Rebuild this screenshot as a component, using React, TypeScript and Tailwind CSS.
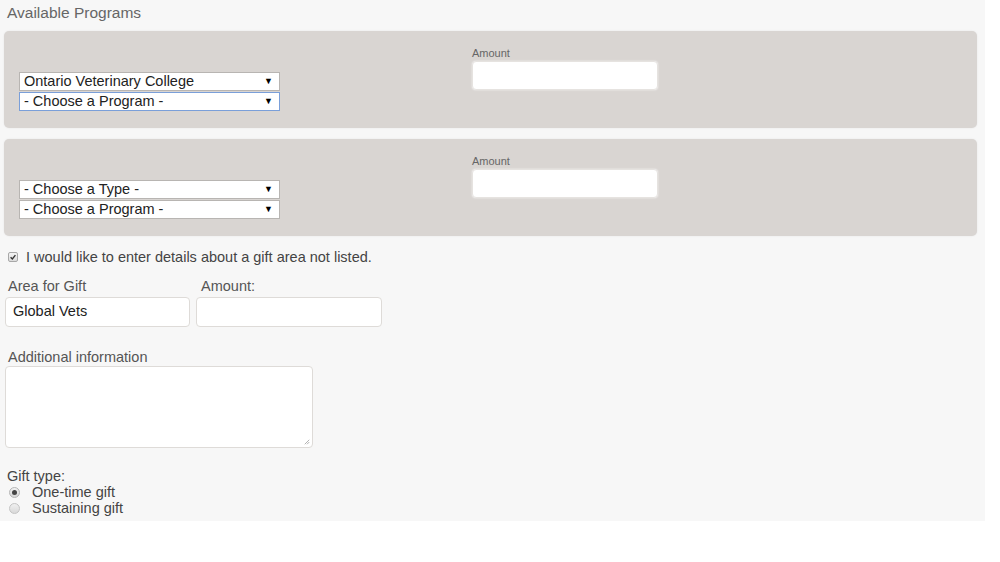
import React from 'react'

function FakeSelect({ label, focused }: { label: string; focused?: boolean }) {
  return (
    <div
      className={`flex h-[19px] w-[261px] items-center justify-between bg-white pl-[4px] pr-[6px] text-[14.5px] leading-none text-[#222] border ${
        focused ? 'border-[#7a9fd9]' : 'border-[#b8b5b2]'
      }`}
    >
      <span>{label}</span>
      <span className="text-[9px] text-black">▼</span>
    </div>
  )
}

function ProgramPanel({ first, second, focused }: { first: string; second: string; focused?: boolean }) {
  return (
    <div className="flex h-[97px] w-[973px] rounded-[5px] bg-[#d9d5d2] shadow-[0_0_2px_rgba(0,0,0,0.08)]">
      <div className="flex w-[468px] flex-col gap-[1px] pl-[15px] pt-[41px]">
        <FakeSelect label={first} />
        <FakeSelect label={second} focused={focused} />
      </div>
      <div className="flex flex-col pt-[16px]">
        <span className="text-[11px] leading-[12px] text-[#666]">Amount</span>
        <div className="mt-[2px] h-[29px] w-[186px] rounded-[4px] border border-[#e6e3e0] bg-white shadow-[0_0_2px_rgba(255,255,255,0.8)]" />
      </div>
    </div>
  )
}

export default function App() {
  return (
    <div className="min-h-screen bg-white" style={{ fontFamily: '"Liberation Sans", Arial, sans-serif' }}>
      <div className="flex h-[521px] w-[985px] flex-col bg-[#f7f7f7] px-[4px]">
        <div className="pl-[3px] pt-[4px] text-[15.5px] leading-[18px] text-[#666]">Available Programs</div>

        <div className="mt-[9px] flex flex-col gap-[11px]">
          <ProgramPanel first="Ontario Veterinary College" second="- Choose a Program -" focused />
          <ProgramPanel first="- Choose a Type -" second="- Choose a Program -" />
        </div>

        {/* Not listed */}
        <div className="mt-[13px] flex items-center gap-[8px] pl-[4px] text-[14.5px] leading-[16px] text-[#444]">
          <div className="flex h-[10px] w-[10px] items-center justify-center rounded-[2px] border border-[#a8a8a8] bg-gradient-to-b from-[#f4f4f4] to-[#dcdcdc]">
            <svg viewBox="0 0 10 10" className="h-[8px] w-[8px]">
              <path d="M2 5.2 L4.2 7.4 L8 2.6" fill="none" stroke="#333" strokeWidth="1.7" />
            </svg>
          </div>
          <span>I would like to enter details about a gift area not listed.</span>
        </div>

        <div className="mt-[13px] flex gap-[6px] pl-[1px]">
          <div className="flex flex-col">
            <span className="pl-[3px] text-[14.5px] leading-[16px] text-[#555]">Area for Gift</span>
            <div className="mt-[3px] flex h-[30px] w-[185px] items-center rounded-[4px] border border-[#dedbd8] bg-white pl-[7px] text-[14.5px] text-[#222]">
              Global Vets
            </div>
          </div>
          <div className="flex flex-col">
            <span className="pl-[5px] text-[14.5px] leading-[16px] text-[#555]">Amount:</span>
            <div className="mt-[3px] h-[30px] w-[186px] rounded-[4px] border border-[#dedbd8] bg-white" />
          </div>
        </div>

        <div className="mt-[22px] flex flex-col pl-[1px]">
          <span className="pl-[3px] text-[14.5px] leading-[16px] text-[#555]">Additional information</span>
          <div className="relative mt-[1px] h-[82px] w-[308px] rounded-[4px] border border-[#dedbd8] bg-white">
            <svg viewBox="0 0 8 8" className="absolute bottom-[2px] right-[2px] h-[6px] w-[6px]">
              <path d="M1 7 L7 1 M4 7 L7 4" stroke="#999" strokeWidth="1" />
            </svg>
          </div>
        </div>

        <div className="mt-[20px] flex flex-col pl-[3px] text-[14.5px] leading-[16px] text-[#444]">
          <span>Gift type:</span>
          <div className="flex items-center gap-[12px] pl-[2px]">
            <div className="flex h-[11px] w-[11px] items-center justify-center rounded-full border border-[#b5b5b5] bg-gradient-to-b from-[#f2f2f2] to-[#d6d6d6]">
              <div className="h-[5px] w-[5px] rounded-full bg-[#444]" />
            </div>
            <span>One-time gift</span>
          </div>
          <div className="flex items-center gap-[12px] pl-[2px]">
            <div className="h-[11px] w-[11px] rounded-full border border-[#c4c4c4] bg-gradient-to-b from-[#f0f0f0] to-[#d9d9d9]" />
            <span>Sustaining gift</span>
          </div>
        </div>
      </div>
    </div>
  )
}
